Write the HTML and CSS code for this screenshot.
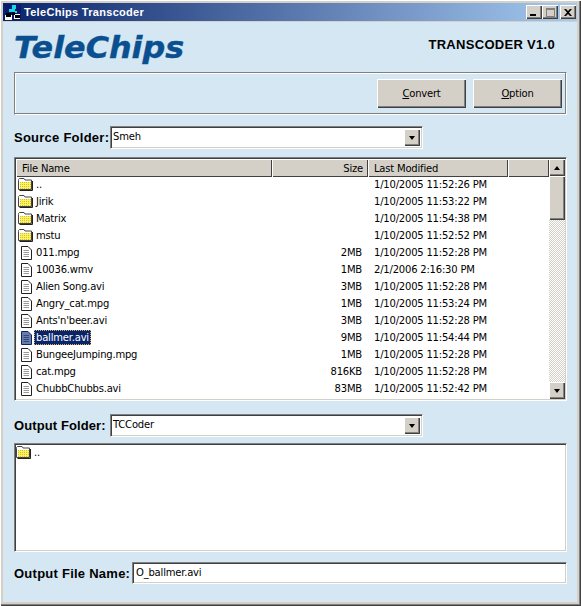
FILE: index.html

```html
<!DOCTYPE html>
<html lang="en">
<head>
    <meta charset="UTF-8">
    <title>TeleChips Transcoder</title>
    <link rel="stylesheet" href="styles.css">
</head>
<body>
    <svg class="defs" width="0" height="0">
        <defs>
            <pattern id="dither" width="2" height="2" patternUnits="userSpaceOnUse">
                <rect width="2" height="2" fill="#fff25c"/>
                <rect width="1" height="1" fill="#c9c23a"/>
            </pattern>
            <symbol id="folder" viewBox="0 0 15 13">
                <path d="M.5 2.500V1.500L1.500.5H6L7 2H13.500V11.500H.5Z" fill="#fff" stroke="#444"/>
                <rect x="2" y="4" width="11" height="7" fill="url(#dither)"/>
                <path d="M14.500 3V12.500H1.500" fill="none" stroke="#222"/>
            </symbol>
            <symbol id="file" viewBox="0 0 11 14">
                <path d="M.5.5H7L10.500 4V13.500H.5Z" fill="#fff" stroke="#222"/>
                <path d="M2.500 4.500H8M2.500 6.500H8M2.500 8.500H8M2.500 10.500H8" stroke="#999"/>
            </symbol>
            <symbol id="file-sel" viewBox="0 0 11 14">
                <path d="M.5.5H7L10.500 4V13.500H.5Z" fill="#6a7ca8" stroke="#0a246a"/>
                <path d="M2.500 4.500H8M2.500 6.500H8M2.500 8.500H8M2.500 10.500H8" stroke="#34487e"/>
            </symbol>
        </defs>
    </svg>

    <div class="window">
        <header class="titlebar">
            <svg class="app-icon" width="16" height="16" viewBox="0 0 16 16">
                <rect width="16" height="16" fill="#0a1a70"/>
                <path d="M7 1h4v4H7zM4 5h6v3H4zM9 7h3v2H9z" fill="#18d8e0"/>
                <path d="M0 11h7v5H0zM9 10h6v5H9z" fill="#fff"/>
                <path d="M1 9h5v4H1zM7 8h3v3H7zM10 11h5v3H10z" fill="#000"/>
            </svg>
            <span class="title">TeleChips Transcoder</span>
            <div class="win-buttons">
                <span class="win-btn"><i class="min-glyph"></i></span>
                <span class="win-btn"><i class="max-glyph"></i></span>
                <span class="win-btn close">
                    <svg width="8" height="7" viewBox="0 0 8 7"><path d="M0 0h2l2 2 2-2h2L5 3.500 8 7H6L4 5 2 7H0l3-3.500z" fill="#000"/></svg>
                </span>
            </div>
        </header>

        <div class="client">
            <div class="brand">
                <span class="logo">TeleChips</span>
                <span class="version">TRANSCODER V1.0</span>
            </div>

            <div class="panel">
                <button class="btn"><u>C</u>onvert</button>
                <button class="btn"><u>O</u>ption</button>
            </div>

            <div class="field-row source-row">
                <label class="field-label">Source Folder:</label>
                <div class="combo">
                    <span class="combo-text">Smeh</span>
                    <span class="scroll-btn"><i class="arrow-down"></i></span>
                </div>
            </div>

            <div class="list source-list">
                <div class="list-main">
                    <div class="list-head">
                        <span class="col-head col-name">File Name</span>
                        <span class="col-head col-size">Size</span>
                        <span class="col-head col-date">Last Modified</span>
                        <span class="col-head col-rest"></span>
                    </div>
                    <div class="row"><span class="name"><svg class="ico-folder"><use href="#folder"/></svg>..</span><span class="size"></span><span class="date">1/10/2005 11:52:26 PM</span></div>
                    <div class="row"><span class="name"><svg class="ico-folder"><use href="#folder"/></svg>Jirik</span><span class="size"></span><span class="date">1/10/2005 11:53:22 PM</span></div>
                    <div class="row"><span class="name"><svg class="ico-folder"><use href="#folder"/></svg>Matrix</span><span class="size"></span><span class="date">1/10/2005 11:54:38 PM</span></div>
                    <div class="row"><span class="name"><svg class="ico-folder"><use href="#folder"/></svg>mstu</span><span class="size"></span><span class="date">1/10/2005 11:52:52 PM</span></div>
                    <div class="row"><span class="name"><svg class="ico-file"><use href="#file"/></svg>011.mpg</span><span class="size">2MB</span><span class="date">1/10/2005 11:52:28 PM</span></div>
                    <div class="row"><span class="name"><svg class="ico-file"><use href="#file"/></svg>10036.wmv</span><span class="size">1MB</span><span class="date">2/1/2006 2:16:30 PM</span></div>
                    <div class="row"><span class="name"><svg class="ico-file"><use href="#file"/></svg>Alien Song.avi</span><span class="size">3MB</span><span class="date">1/10/2005 11:52:28 PM</span></div>
                    <div class="row"><span class="name"><svg class="ico-file"><use href="#file"/></svg>Angry_cat.mpg</span><span class="size">1MB</span><span class="date">1/10/2005 11:53:24 PM</span></div>
                    <div class="row"><span class="name"><svg class="ico-file"><use href="#file"/></svg>Ants'n'beer.avi</span><span class="size">3MB</span><span class="date">1/10/2005 11:52:28 PM</span></div>
                    <div class="row"><span class="name"><svg class="ico-file"><use href="#file-sel"/></svg><b class="selected">ballmer.avi</b></span><span class="size">9MB</span><span class="date">1/10/2005 11:54:44 PM</span></div>
                    <div class="row"><span class="name"><svg class="ico-file"><use href="#file"/></svg>BungeeJumping.mpg</span><span class="size">1MB</span><span class="date">1/10/2005 11:52:28 PM</span></div>
                    <div class="row"><span class="name"><svg class="ico-file"><use href="#file"/></svg>cat.mpg</span><span class="size">816KB</span><span class="date">1/10/2005 11:52:28 PM</span></div>
                    <div class="row"><span class="name"><svg class="ico-file"><use href="#file"/></svg>ChubbChubbs.avi</span><span class="size">83MB</span><span class="date">1/10/2005 11:52:42 PM</span></div>
                    <div class="row"><span class="name"><svg class="ico-file"><use href="#file"/></svg></span><span class="size"></span><span class="date"></span></div>
                </div>
                <div class="scrollbar">
                    <span class="scroll-btn"><i class="arrow-up"></i></span>
                    <span class="thumb"></span>
                    <span class="track"></span>
                    <span class="scroll-btn"><i class="arrow-down"></i></span>
                </div>
            </div>

            <div class="field-row output-row">
                <label class="field-label">Output Folder:</label>
                <div class="combo">
                    <span class="combo-text">TCCoder</span>
                    <span class="scroll-btn"><i class="arrow-down"></i></span>
                </div>
            </div>

            <div class="list output-list">
                <div class="out-row"><svg class="ico-folder"><use href="#folder"/></svg>..</div>
            </div>

            <div class="field-row file-row">
                <label class="field-label">Output File Name:</label>
                <div class="text-input">O_ballmer.avi</div>
            </div>
        </div>
    </div>
</body>
</html>
```

FILE: styles.css

```css
:root {
    --face: #d4d0c8;
    --client: #d5e7f3;
    --ui-font: "DejaVu Sans", sans-serif;
    --label-font: "Liberation Sans", Arial, sans-serif;
}

* {
    margin: 0;
    padding: 0;
    box-sizing: border-box;
}

body {
    background: var(--face);
    font-family: var(--ui-font);
    font-size: 10px;
    letter-spacing: -.2px;
    color: #000;
}

.defs {
    position: absolute;
}

.window {
    width: 581px;
    height: 606px;
    padding: 3px 4px 4px 3px;
    background: var(--face);
    box-shadow: inset 1px 1px 0 #fff, inset -1px -1px 0 #404040, inset -2px -2px 0 #808080;
    display: flex;
    flex-direction: column;
}

.titlebar {
    height: 18px;
    flex: none;
    display: flex;
    align-items: center;
    padding: 0 1px 0 2px;
    background: linear-gradient(90deg, #0a246a, #a6caf0);
    color: #fff;
}

.app-icon {
    flex: none;
}

.title {
    margin-left: 3px;
    font-family: var(--label-font);
    font-size: 11px;
    font-weight: bold;
    letter-spacing: .3px;
}

.win-buttons {
    margin-left: auto;
    display: flex;
}

.win-btn {
    width: 16px;
    height: 14px;
    display: flex;
    align-items: center;
    justify-content: center;
    background: var(--face);
    box-shadow: inset 1px 1px 0 #fff, inset -1px -1px 0 #404040, inset -2px -2px 0 #808080;
}

.win-btn.close {
    margin-left: 2px;
}

.min-glyph {
    width: 6px;
    height: 2px;
    margin-top: 6px;
    margin-right: 2px;
    background: #000;
}

.max-glyph {
    width: 9px;
    height: 9px;
    border: 1px solid #808080;
    border-top-width: 2px;
}

.client {
    flex: 1;
    margin-top: 1px;
    padding: 0 10px 0 11px;
    background: var(--client);
}

.brand {
    height: 50px;
    display: flex;
    justify-content: space-between;
    padding-right: 12px;
}

.logo {
    display: inline-block;
    font-family: "DejaVu Sans", sans-serif;
    font-size: 30px;
    line-height: 52px;
    height: 50px;
    font-weight: bold;
    font-style: italic;
    letter-spacing: 0;
    color: #0a4f8f;
    -webkit-text-stroke: .4px #0a4f8f;
    transform: scaleX(1.06);
    transform-origin: left center;
}

.version {
    font-family: var(--label-font);
    font-size: 13px;
    font-weight: bold;
    line-height: 46px;
    letter-spacing: .3px;
}

.panel {
    height: 43px;
    display: flex;
    justify-content: flex-end;
    gap: 7px;
    padding: 6px 4px 0 0;
    border: 1px solid #808080;
    border-right-color: #fff;
    border-bottom-color: #fff;
    box-shadow: inset -1px -1px 0 #808080, inset 1px 1px 0 #fff;
}

.btn {
    width: 89px;
    height: 29px;
    border: none;
    background: var(--face);
    font-family: var(--ui-font);
    font-size: 10px;
    letter-spacing: -.2px;
    color: #000;
    box-shadow: inset 1px 1px 0 #fff, inset -1px -1px 0 #404040, inset -2px -2px 0 #808080;
}

.field-row {
    display: flex;
    align-items: center;
}

.field-label {
    width: 96px;
    flex: none;
    font-family: var(--label-font);
    font-size: 13px;
    font-weight: bold;
    letter-spacing: .25px;
    white-space: nowrap;
}

.source-row {
    margin-top: 11px;
    height: 23px;
}

.output-row {
    margin-top: 13px;
    height: 23px;
}

.output-row .field-label {
    letter-spacing: .1px;
}

.file-row {
    margin-top: 10px;
    height: 22px;
}

.file-row .field-label {
    width: 118px;
}

.combo {
    width: 313px;
    height: 23px;
    display: flex;
    align-items: stretch;
    justify-content: space-between;
    padding: 2px;
    background: #fff;
    border: 1px solid #808080;
    border-right-color: #fff;
    border-bottom-color: #fff;
    box-shadow: inset 1px 1px 0 #404040, inset -1px -1px 0 var(--face);
}

.combo-text {
    line-height: 15px;
}

.combo .scroll-btn {
    height: auto;
}

.scroll-btn {
    width: 16px;
    height: 17px;
    flex: none;
    display: flex;
    align-items: center;
    justify-content: center;
    background: var(--face);
    box-shadow: inset 1px 1px 0 #fff, inset -1px -1px 0 #404040, inset -2px -2px 0 #808080;
}

.arrow-down,
.arrow-up {
    width: 0;
    height: 0;
    border-left: 3.5px solid transparent;
    border-right: 3.5px solid transparent;
}

.arrow-down {
    border-top: 4px solid #000;
}

.arrow-up {
    border-bottom: 4px solid #000;
}

.list {
    display: flex;
    background: #fff;
    border: 1px solid #808080;
    border-right-color: #fff;
    border-bottom-color: #fff;
    box-shadow: inset 1px 1px 0 #404040, inset -1px -1px 0 var(--face);
    padding: 1px;
    overflow: hidden;
}

.source-list {
    margin-top: 8px;
    height: 244px;
}

.output-list {
    margin-top: 6px;
    height: 109px;
}

.list-main {
    flex: 1;
    min-width: 0;
    overflow: hidden;
}

.list-head {
    height: 17px;
    display: grid;
    grid-template-columns: 256px 96px 140px 1fr;
    background: var(--face);
    line-height: 17px;
}

.col-head {
    padding: 1px 5px 0 6px;
    box-shadow: inset 1px 1px 0 #fff, inset -1px -1px 0 #404040;
}

.col-size {
    text-align: right;
}

.row {
    height: 17px;
    display: grid;
    grid-template-columns: 256px 90px 1fr;
    align-items: center;
    line-height: 17px;
    white-space: nowrap;
}

.name {
    display: flex;
    align-items: center;
    padding-left: 2px;
}

.size {
    text-align: right;
}

.date {
    padding-left: 12px;
}

.ico-folder {
    width: 15px;
    height: 13px;
    flex: none;
    margin-right: 3px;
}

.ico-file {
    width: 11px;
    height: 14px;
    flex: none;
    margin: 0 4px 0 3px;
}

.selected {
    font-weight: normal;
    background: #0a246a;
    color: #fff;
    line-height: 15px;
    padding: 0 2px;
    margin-left: -2px;
    outline: 1px dotted #d5b060;
    outline-offset: -1px;
}

.scrollbar {
    width: 16px;
    flex: none;
    display: flex;
    flex-direction: column;
}

.thumb {
    height: 44px;
    flex: none;
    background: var(--face);
    box-shadow: inset 1px 1px 0 #fff, inset -1px -1px 0 #404040, inset -2px -2px 0 #808080;
}

.track {
    flex: 1;
    background: conic-gradient(#fff 25%, var(--face) 0 50%, #fff 0 75%, var(--face) 0) 0 0 / 2px 2px;
}

.out-row {
    display: flex;
    align-items: center;
    height: 14px;
}

.text-input {
    width: 435px;
    height: 22px;
    padding: 0 3px;
    line-height: 20px;
    background: #fff;
    border: 1px solid #808080;
    border-right-color: #fff;
    border-bottom-color: #fff;
    box-shadow: inset 1px 1px 0 #404040, inset -1px -1px 0 var(--face);
}
```
